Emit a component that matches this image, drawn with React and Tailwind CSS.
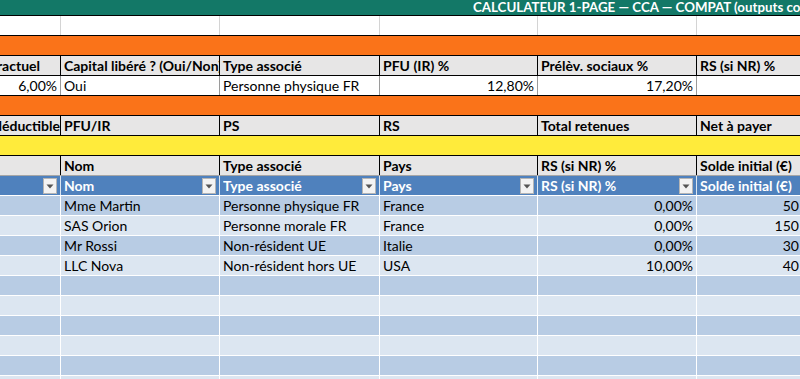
import React from 'react'

const W = ['w-[61px]', 'w-[159px]', 'w-[160px]', 'w-[158px]', 'w-[159px]', 'w-[165px]']

function Cell({ i, line = 'border-[#d4d4d4]', right, bold, children, filter }) {
  return (
    <div className={`${W[i]} shrink-0 h-full border-r ${line} flex items-end overflow-hidden whitespace-nowrap px-[3px] pb-[2px] ${right ? 'justify-end' : ''} ${bold ? 'font-bold' : ''}`}>
      {filter ? (
        <>
          <span className="flex-1 overflow-hidden">{children}</span>
          <FilterBtn />
        </>
      ) : (
        children
      )}
    </div>
  )
}

function FilterBtn() {
  return (
    <span className="shrink-0 w-[14px] h-[16px] mb-[-1px] bg-[#f3f3f3] border border-[#b5b5b5] flex items-center justify-center">
      <svg width="8" height="5" viewBox="0 0 8 5">
        <path d="M0.5 0.5h7L4 4.5z" fill="#555" />
      </svg>
    </span>
  )
}

function Row({ bg, bottom, h = 'h-[20px]', children }) {
  return <div className={`flex ${h} border-b ${bottom} ${bg}`}>{children}</div>
}

const people = [
  ['Mme Martin', 'Personne physique FR', 'France', '0,00%', '50 000,00 €'],
  ['SAS Orion', 'Personne morale FR', 'France', '0,00%', '150 000,00 €'],
  ['Mr Rossi', 'Non-résident UE', 'Italie', '0,00%', '30 000,00 €'],
  ['LLC Nova', 'Non-résident hors UE', 'USA', '10,00%', '40 000,00 €'],
]

export default function App() {
  const rows = [...people, ...Array(6).fill(null)]
  return (
    <div className="w-[800px] h-[379px] overflow-hidden bg-white text-[14px] leading-none text-black" style={{ fontFamily: '"Lato", "Liberation Sans", sans-serif' }}>
      <div className="w-[870px]">
        <div className="h-[16px] border-b border-black bg-[#137867] relative overflow-hidden">
          <span className="absolute left-[473px] top-[1px] text-white text-[13.3px] font-bold whitespace-nowrap">
            CALCULATEUR 1-PAGE — CCA — COMPAT (outputs compatibles)
          </span>
        </div>

        <Row bg="bg-white" bottom="border-black">
          {[0, 1, 2, 3, 4, 5].map((i) => <Cell key={i} i={i} />)}
        </Row>

        <div className="h-[20px] border-b border-black bg-[#fa7319]" />

        <Row bg="bg-[#e7e6e6]" bottom="border-black">
          <Cell i={0} line="border-black" right bold><span className="pr-[17px]">Taux contractuel</span></Cell>
          <Cell i={1} line="border-black" bold>Capital libéré ? (Oui/Non)</Cell>
          <Cell i={2} line="border-black" bold>Type associé</Cell>
          <Cell i={3} line="border-black" bold>PFU (IR) %</Cell>
          <Cell i={4} line="border-black" bold>Prélèv. sociaux %</Cell>
          <Cell i={5} line="border-black" bold>RS (si NR) %</Cell>
        </Row>

        <Row bg="bg-white" bottom="border-black">
          <Cell i={0} line="border-[#9a9a9a]" right>6,00%</Cell>
          <Cell i={1} line="border-[#9a9a9a]">Oui</Cell>
          <Cell i={2} line="border-[#9a9a9a]">Personne physique FR</Cell>
          <Cell i={3} line="border-[#9a9a9a]" right>12,80%</Cell>
          <Cell i={4} line="border-[#9a9a9a]" right>17,20%</Cell>
          <Cell i={5} line="border-[#9a9a9a]" />
        </Row>

        <div className="h-[20px] border-b border-black bg-[#fa7319]" />

        <Row bg="bg-[#e7e6e6]" bottom="border-black">
          <Cell i={0} line="border-black" right bold><span className="mr-[-3px]">Intérêts déductible</span></Cell>
          <Cell i={1} line="border-black" bold>PFU/IR</Cell>
          <Cell i={2} line="border-black" bold>PS</Cell>
          <Cell i={3} line="border-black" bold>RS</Cell>
          <Cell i={4} line="border-black" bold>Total retenues</Cell>
          <Cell i={5} line="border-black" bold>Net à payer</Cell>
        </Row>

        <div className="h-[20px] border-b border-black bg-[#ffeb3b]" />

        <Row bg="bg-[#e7e6e6]" bottom="border-[#a6a6a6]">
          <Cell i={0} line="border-black" />
          <Cell i={1} line="border-black" bold>Nom</Cell>
          <Cell i={2} line="border-black" bold>Type associé</Cell>
          <Cell i={3} line="border-black" bold>Pays</Cell>
          <Cell i={4} line="border-black" bold>RS (si NR) %</Cell>
          <Cell i={5} line="border-black" bold>Solde initial (€)</Cell>
        </Row>

        <Row bg="bg-[#4f81bd] text-white" bottom="border-white">
          <Cell i={0} line="border-[#dce6f1]" bold filter />
          <Cell i={1} line="border-[#dce6f1]" bold filter>Nom</Cell>
          <Cell i={2} line="border-[#dce6f1]" bold filter>Type associé</Cell>
          <Cell i={3} line="border-[#dce6f1]" bold filter>Pays</Cell>
          <Cell i={4} line="border-[#dce6f1]" bold filter>RS (si NR) %</Cell>
          <Cell i={5} line="border-[#dce6f1]" bold filter>Solde initial (€)</Cell>
        </Row>

        {rows.map((r, k) => (
          <Row key={k} bg={k % 2 === 0 ? 'bg-[#b8cce4]' : 'bg-[#dce6f1]'} bottom="border-white">
            <Cell i={0} line="border-white" />
            <Cell i={1} line="border-white">{r && r[0]}</Cell>
            <Cell i={2} line="border-white">{r && r[1]}</Cell>
            <Cell i={3} line="border-white">{r && r[2]}</Cell>
            <Cell i={4} line="border-white" right>{r && r[3]}</Cell>
            <Cell i={5} line="border-white" right>{r && r[4]}</Cell>
          </Row>
        ))}
      </div>
    </div>
  )
}
